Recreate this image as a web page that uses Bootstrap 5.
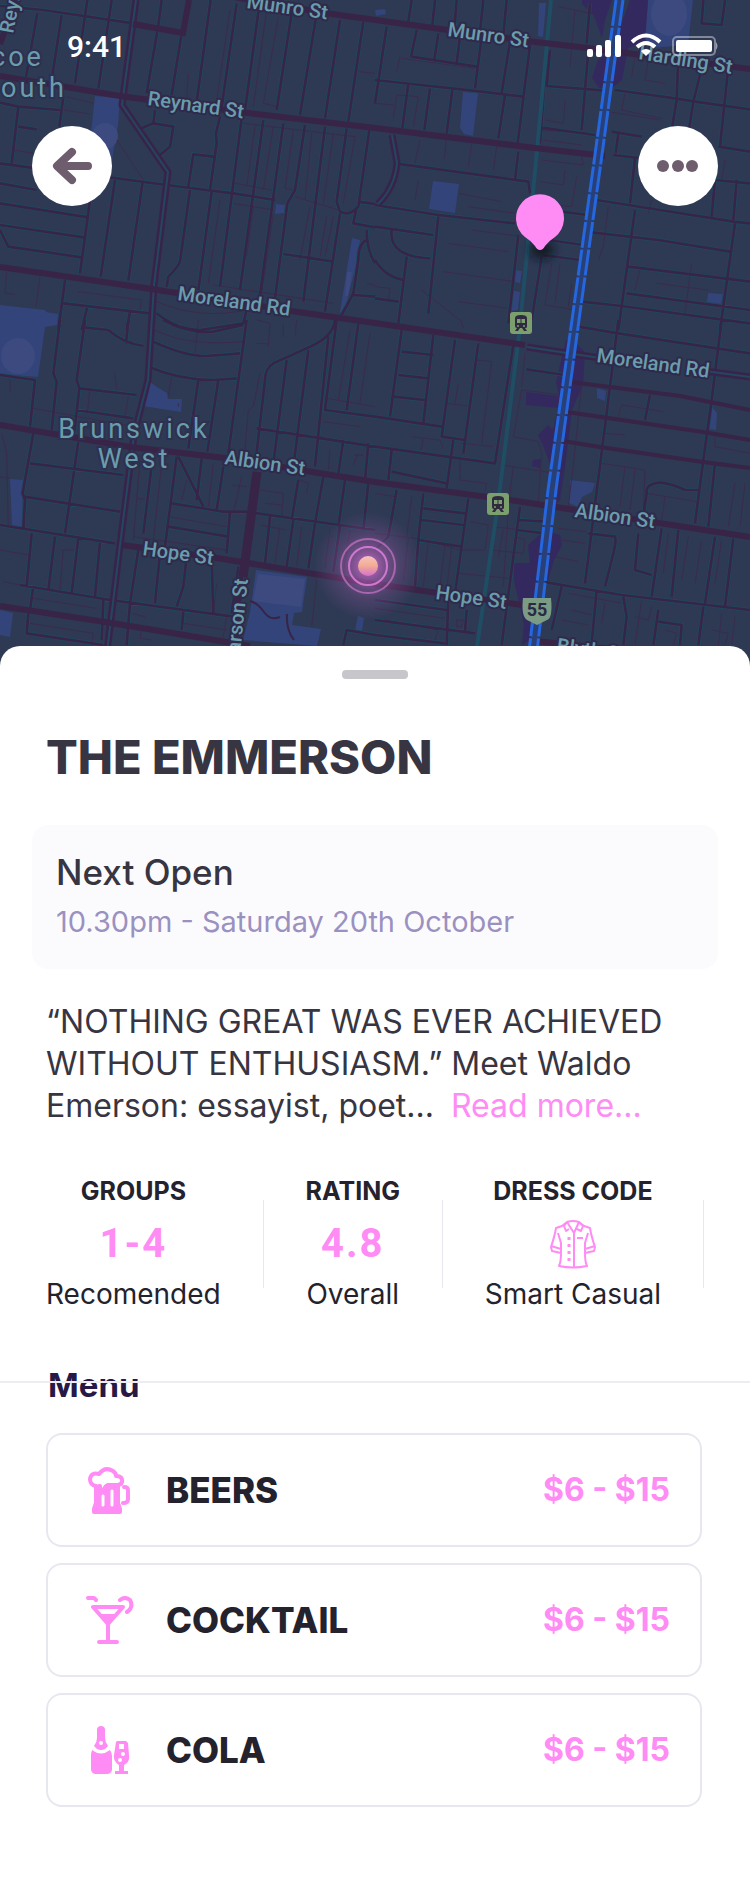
<!DOCTYPE html>
<html lang="en">
<head>
<meta charset="utf-8">
<meta name="viewport" content="width=device-width, initial-scale=1">
<title>The Emmerson</title>
<link href="https://cdn.jsdelivr.net/npm/bootstrap@5.3.0/dist/css/bootstrap.min.css" rel="stylesheet">
<style>
  :root { --pink: #ff8bf4; --ink: #373542; --dark: #24222c; --line: #e7e7ef; }
  body { font-family: Inter, "Open Sans", sans-serif; color: var(--dark); background: #fff; }
  .map-art { width: 100%; height: auto; display: block; background: #2e3954; }
  .map-art text { font-family: Roboto, sans-serif; fill: #6a9dab; }
  .street { font-size: 20px; font-weight: 500; paint-order: stroke; stroke: #2f2a4b; stroke-width: 4px; stroke-linejoin: round; }
  .suburb { font-size: 27px; letter-spacing: 3px; paint-order: stroke; stroke: #2e3050; stroke-width: 4px; }
  .casing { fill: none; stroke: #1d4b61; stroke-width: 12; }
  .minor { fill: none; stroke: #372548; stroke-width: 8; stroke-linejoin: round; }
  .lane { fill: none; stroke: #3a2b4c; stroke-width: 3; }
  .major { fill: none; stroke: #382446; stroke-width: 6; }
  .park { fill: #33447a; }
  .zone { fill: #33295f; }
  .overlay-top { position: absolute; inset: 0 0 auto 0; }
  .status { padding: 32px 32px 0 67px; height: 66px; color: #fff; font: 500 30px/30px Roboto, sans-serif; }
  .tools { padding: 60px 32px 0; }
  .round-btn { width: 80px; height: 80px; background: #fff; border: 0; padding: 0; }
  .sheet { position: relative; margin-top: -44px; border-radius: 20px 20px 0 0; background: #fff; }
  .grip { width: 66px; height: 9px; border-radius: 4px; background: #c7c6cb; margin: 0 auto; }
  .venue { font-size: 47px; line-height: 52px; font-weight: 800; color: var(--ink); margin: 0 0 42px; padding: 0 14px; }
  .next-open { background: #fbfbfe; border-radius: 16px; padding: 24px; margin-bottom: 32px; min-height: 144px; }
  .next-open h2 { font-size: 35px; line-height: 46px; font-weight: 500; color: var(--ink); margin: 0 0 8px; }
  .next-open p { font-size: 29px; line-height: 38px; color: #9b91c0; margin: 0; }
  .about { font-size: 32px; line-height: 42px; color: var(--ink); padding: 0 14px; margin: 0 0 48px; }
  .about a { color: var(--pink); text-decoration: none; margin-left: 8px; }
  .stats { padding: 0 14px; margin-bottom: 69px; }
  .stat { line-height: 36px; font-size: 28px; }
  .stat strong { display: block; font-size: 25px; line-height: 32px; font-weight: 700; }
  .stat .figure { height: 69px; padding-top: 5px; display: flex; align-items: center; justify-content: center; font: 700 40px/64px Roboto, sans-serif; letter-spacing: 2px; color: var(--pink); }
  .divide { width: 1px; height: 88px; background: var(--line); }
  .menu-head { border-top: 2px solid #ededf1; padding: 0 48px; }
  .menu-head h2 { font-size: 33px; line-height: 40px; font-weight: 700; color: #271846; margin: -18px 0 28px; position: relative; z-index: -1; }
  .menu-list { padding: 0 48px 72px 46px; gap: 16px; }
  .menu-item { height: 114px; border: 2px solid var(--line); border-radius: 16px; padding: 0 30px 0 38px; color: var(--dark); text-decoration: none; background: #fff; }
  .menu-item .label-text { font-size: 35px; font-weight: 800; margin-left: 32px; }
  .menu-item .price { font-size: 32px; font-weight: 700; color: var(--pink); }
  .menu-item svg { color: var(--pink); }
</style>
</head>
<body>
<header class="position-relative">
  <svg class="map-art" viewBox="0 0 750 690" role="img" aria-label="Map around Brunswick West">
    <defs>
      <g id="nw"><path d="M0 18L130 30 400 70M112 40L78 232M185 45L155 240M262 0L225 250M335 0L295 265M485 0L475 75 440 280M545 100L515 285M632 0L590 305M710 10L665 320M780 0L735 330M878 20L830 330M950 40L900 345M1020 60L975 355M1090 65L1045 365M0 308L55 320 180 330M55 320L35 490M190 290L178 380M55 380L110 388M0 490L110 505M0 550L110 570M330 532L500 555 700 580 825 600M0 610L265 652M0 675L252 712M0 690L25 740 245 772M270 600L240 820M345 540L302 830M428 545L385 842M570 570L540 785Q535 800 505 830L500 860M425 385L460 370 520 380 510 440 480 465M460 370L465 330M660 350L648 400 650 430 630 570M640 470L580 463 565 560M635 575L595 870M725 355L660 860M790 360L720 870M850 370L780 885M915 375L885 570 862 610 825 895M975 380L910 905M1040 385L1010 605 1020 635Q1050 650 1075 620L1108 390M1020 640L975 935M850 762L1000 785M1075 605L1125 612M1070 620L1060 670 1125 682M1125 790Q1100 750 1100 690M1100 720Q1075 730 1075 780L1060 880 1025 945M1060 885L1125 890M195 840L175 990M190 910L450 940M262 920L245 990M390 935L380 990M470 940Q530 990 600 990L730 970 740 930"/></g>
      <g id="ne"><path d="M35 80L0 310M125 90L108 170M190 100L178 180M255 110L245 190M108 170L305 200M320 110L300 265M405 125L380 280M465 135L428 430M0 240L320 275 445 290M100 250L82 385M165 265L148 390M232 270L215 400M390 285L370 415M110 0L100 65M180 0L172 75M245 0L238 85M325 0L315 95M395 0L385 105M525 150L515 260M515 258L690 272M645 10L635 130M640 150L620 390M500 383L660 405M515 150L495 430M720 270L900 295 960 305 1125 328M910 170L905 300 890 390M985 185L955 305 940 400M1060 200L1035 440M710 395L800 410M730 400L722 460M1030 440L1125 455M715 465L800 475M985 0L980 70 1040 75 1050 0M780 475L765 610M665 600L1075 665 1125 670M1020 540L1125 550M1020 540L1010 650M1085 540L1075 660M430 455L420 540M60 490L460 545 465 580M0 615L190 645 420 670M190 650L160 940M0 680L175 705M50 690Q40 770 165 775M0 780Q30 830 85 840M95 770L70 970M560 635L638 645M520 720L625 735M430 705L400 970M500 765L615 780M500 770L470 960M650 697L850 720 1065 755M780 630L730 990M1080 670L1035 990M760 800L1125 845M755 880L1125 930M620 905L740 918 1125 970M0 895L70 905"/></g>
      <g id="sw"><path d="M0 165L105 180 90 320M180 0L160 160 170 185 155 330M255 0L230 180 238 205 220 360M250 22L325 30Q370 70 430 78M385 0L378 70M238 205L410 225M228 270L400 295M490 0Q560 40 640 35L730 15M460 65Q560 110 620 108L720 100M445 140Q540 180 640 180L710 175M740 0L685 400M595 180L565 385M655 180L622 395M1005 0Q1000 50 930 80L820 130Q795 145 795 180L765 440M860 120L820 430M925 90L880 440M985 50L945 440M1075 10L1040 270M1010 0L975 270 1125 290M770 325L1125 380M100 340L68 520 75 540 70 625M235 365L195 640M90 430L370 465M72 530L360 575M0 615L345 670M95 640L80 800M165 650L145 810M235 655L215 820M300 665L285 830M60 795L330 840 700 890M100 800L90 870M460 395L430 640M530 410L495 680M535 410L610 560M515 550L670 575 735 575M605 415L590 540M670 440L650 570M505 620L685 650M690 575L680 700M735 575L1125 630M810 590L795 730M880 600L860 740M945 610L925 745M1020 620L1000 755M895 480L875 600M970 470L945 610M1035 480L1015 620M1105 490L1090 630M1030 360L1015 460M1105 370L1095 480M415 690L390 850 380 975M480 700L465 850M560 710L550 800 530 860M635 720L640 880M715 740L695 880M85 880L80 940 310 975M310 840L305 960M550 875L545 930M1125 945L1040 930 1030 975"/></g>
      <g id="se"><path d="M80 30L45 290M80 95L175 105M70 165L160 175M55 230L150 240M240 60L200 350 270 360M175 45L145 310M310 70L265 400M0 290L200 320M415 75L360 430 0 380M235 360L215 505M50 390L40 480M50 455L215 490M455 148L570 165M610 20L730 40 1125 100M730 0L705 200 630 790M1040 0L1010 240 985 420 960 610M825 225L810 300M1020 430L1000 620M65 510L40 650 0 690M145 520L130 660 260 680M280 535L240 820M145 565L270 580M140 600L265 615M130 660L120 800M435 560L380 975M430 600L515 605M425 630L510 640M640 640L720 650Q725 660 715 700L690 800M500 785L740 825 1125 870M790 640L780 750 830 765M860 625L830 830M910 630L890 830M1020 650L990 850M1075 655L1050 860M805 590L815 520Q810 490 860 488 900 495 930 510L970 510M560 800L530 930M665 810L650 970M745 830L755 890 745 975M850 870L835 975M985 860L970 975M850 905L920 915 915 975M220 830L215 975M0 840L215 870M0 900L300 940M275 870L270 935M0 945L210 970"/></g>
      <radialGradient id="glow"><stop offset="0" stop-color="#f07ae8" stop-opacity=".8"/><stop offset=".3" stop-color="#c868c6" stop-opacity=".5"/><stop offset=".6" stop-color="#a45cac" stop-opacity=".25"/><stop offset="1" stop-color="#a45cac" stop-opacity="0"/></radialGradient>
      <linearGradient id="sun" x1="0" y1="0" x2="0" y2="1"><stop offset="0" stop-color="#f6c3c3"/><stop offset=".45" stop-color="#f3ae94"/><stop offset="1" stop-color="#d673c8"/></linearGradient>
      <filter id="soft" x="-50%" y="-50%" width="200%" height="200%"><feGaussianBlur stdDeviation="4"/></filter>
      <g id="station"><rect x="-11" y="-11" width="22" height="22" rx="3" fill="#7c9f6e"/><path d="M-6 7V-5Q-6-8 0-8T6-5V4Q6 5 4 5L6 8H3L1 5H-1L-3 8H-6L-4 5Q-6 5-6 3Z" fill="#2f2a40"/><path d="M-4-4h3.500v4H-4zM.5-4H4v4H.5z" fill="#7c9f6e"/><circle cx="-3" cy="3" r="1" fill="#7c9f6e"/><circle cx="3" cy="3" r="1" fill="#7c9f6e"/></g>
    </defs>
    <!-- parks and built-up zones -->
    <path class="park" d="M95 96L120 98 118 125 112 160 88 160zM0 305L45 310 46 312 58 314 57 325 45 327 38 377 0 374zM276 204L285 205 284 213 275 214zM352 238L360 240 357 262 344 312 340 312zM463 92L478 93 473 136 464 134 460 128zM433 181L459 184 455 213 429 209zM539 3L546 3 543 37 538 36zM648 0L693 0 688 45 650 48 645 38zM147 380L157 387 167 393 168 399 182 399 181 412 168 410 143 406zM10 479L23 480 22 527 12 526zM256 570L307 577 302 612 294 613 292 625 321 629 317 646 243 640 250 612zM0 610L13 613 10 637 0 635zM514 270L522 271 520 283 514 282zM512 290L520 292 518 310 511 311zM708 293L723 294 721 304 707 302zM597 388L606 391 605 401 597 398zM712 407L717 413 716 430 709 429zM570 480L595 483 592 492 582 497 578 507 569 503 570 495zM358 616L364 618 362 631 355 630zM375 10L385 9 386 14 376 16z"/>
    <g fill="#3c4a80"><ellipse cx="105" cy="136" rx="13" ry="13"/><ellipse cx="18" cy="356" rx="17" ry="18"/><ellipse cx="669" cy="14" rx="18" ry="22"/><path d="M347 272h5l-4 24h-3zM258 574l47 5-4 28-48-6z"/></g>
    <path class="zone" d="M582 0L612 0 605 20 602 38 594 16 582 4zM630 0H648L645 42 628 48 622 80 612 88 600 89 592 78 598 60 612 50zM526 392L565 397 560 408 526 405zM566 340L572 340 585 352 583 385 572 410 566 460 560 500 550 510 545 500 552 470 543 445 538 435 548 425 553 430 560 400 556 382zM545 530L560 535 562 545 554 560 545 590 535 605 530 640 522 645 524 625 514 580 514 563 530 563 528 545zM533 460L541 459 540 468 532 466z"/>
    <g transform="scale(.33333)">
      <g class="casing"><use href="#nw"/><use href="#ne" x="1125"/><use href="#sw" y="960"/><use href="#se" x="1125" y="960"/></g>
      <!-- back lanes -->
      <g class="lane"><path d="M200 290L280 310M190 330L270 342M350 420L430 540M835 50L790 310 830 320M690 30L650 300M705 550L815 570M700 610L820 630M885 590L1015 630M235 875L425 900 420 930M20 815L15 880 45 883M120 830L108 920M470 905Q600 960 740 930M765 380L740 560M820 380L790 570M880 390L855 565 880 570M1065 410L1030 610M660 600L625 850M760 620L740 770M820 640L785 880M935 400L915 600M1000 400L970 610M730 370L1065 410M1075 215L1125 220M565 220L560 300M930 620L900 780M1000 650L975 770M980 650L960 770M40 450L100 460M640 855L1000 910M1100 850L1125 855M60 0L55 30M800 30L760 320"/>
      <g transform="translate(1125)"><path d="M75 170L65 215M80 175L300 205M65 285L130 290 115 380M0 310L55 315M65 285L55 355M135 420L120 490M215 410L208 475M290 430L280 500M365 440L355 510M570 300L565 370 510 360M550 20L670 45M600 30L585 200M500 390L640 400M505 420L620 435M500 480L625 495 620 470M495 545L565 555 570 510M605 530L590 620 540 615M750 280L740 330 860 355M700 335L855 360M780 170L770 230M820 180L810 240 870 250M280 620L420 640M250 580L380 605M290 690L430 708M220 730L400 755M205 815L420 845M250 905L400 925M530 790L510 915 600 930M555 790L540 910M590 850L580 920M845 850L1000 870M950 790L930 940M700 620L685 740 670 780M795 810L780 870M140 870L260 965 265 985M0 860L45 865 40 900M1000 500L990 590M1050 480L1040 540M130 540L120 600M830 600L820 640"/></g>
      <g transform="translate(0 960)"><path d="M30 180V215M100 265L400 320M270 205L262 280M345 160L350 210M385 230L375 290M5 340L20 400 25 620M465 30Q560 80 730 65M595 0L585 100M515 170L505 230M770 0L810 10 805 80M770 70L805 72M850 10V50M890 0L885 50M780 160L760 260 745 270 735 390M1050 30L1015 240M1110 40L1080 250M980 235L1125 260M970 305L1080 320M1065 405H1090M990 390L985 450M420 420L400 660M455 440L430 450M485 430L460 660M410 535L435 538M400 650L680 690M505 590L680 620M560 480L545 540M640 430L625 560M725 470L700 580M695 495L740 500M780 510L850 520 845 590M795 550L845 555M900 480L925 490 920 520M840 620L825 730M905 620L890 740M780 615L860 630M0 690L85 705M190 690L180 810M220 690H185M10 785L60 795M100 835L290 865M90 910L280 940 275 975M395 880L435 890M425 930L420 955 455 960M550 910L680 930M650 790L640 880M950 780L935 920M1050 630L1030 760M990 630L975 745M535 260V250M0 470L30 475M680 890L665 975M1075 400L1060 435"/></g>
      <g transform="translate(1125 960)"><path d="M305 120L350 125 320 370M210 250L280 258M250 190L240 250M110 350L195 360 205 385M145 355L138 390M260 370L355 380M255 410V480L335 490 330 515M380 435L530 458M415 440L400 560M500 400L490 545M440 210L560 225M440 210L415 350 490 365 500 400M620 190L600 390 580 560M730 290L740 255 865 275M690 340L750 345M1020 350V380L1125 400M680 430L810 450 805 590M750 440L735 560M780 450L765 570M815 520L965 545M870 530L860 600M1080 490L1060 620M1110 490L1095 620M0 520L60 530M110 530L95 650M0 640L120 655 260 690 330 690 340 615 285 605M100 655L85 780M160 665L145 800M210 675L195 800M230 680L215 810M355 620L440 630M385 630L370 710M420 650L450 660 445 700 350 690M400 570L385 800M250 760L400 775M560 660L630 670M540 710L610 725M550 625L635 635M580 820L740 850M590 870L650 885M560 900L640 915M690 850L680 910M800 840L780 975M830 860L820 900 780 890M880 640L865 760M940 650L920 780M980 660L960 790M1040 660L1020 790M0 790L120 800 250 830M0 865L210 895M30 900L190 930 180 960M245 900H265L260 920H245ZM1040 880L1030 975M1080 890L1070 975M870 930L905 940 895 975M1010 930L1060 940 1050 975M450 100L440 200"/></g></g>
      <g class="minor"><use href="#nw"/><use href="#ne" x="1125"/><use href="#sw" y="960"/><use href="#se" x="1125" y="960"/></g>
    </g>
    <!-- creek road -->
    <g fill="none" stroke-linejoin="round"><path d="M136 0L122 105 168 172 154 285 148 380 134 435 120 545 106 660M392 135L397 163Q395 187 378 204M527 347L600 358M705 371L750 377" stroke="#38244a" stroke-width="7"/><path d="M136 0L122 105 168 172 154 285 148 380 134 435 120 545 106 660M392 135L397 163Q395 187 378 204M527 347L600 358M705 371L750 377" stroke="#234760" stroke-width="2"/></g>
    <path d="M551 0L533 193 519 335 498 504 475 660" fill="none" stroke="#1f4d63" stroke-width="4"/>
    <!-- main roads -->
    <path class="major" d="M228 -4L325 13 448 30 527 41 588 48 750 69M133 24L183 33 189 0M0 76L120 96 240 112 375 128 535 148 605 156M0 267L145 288 298 312 375 323 525 345M0 425L130 447 225 458 375 482 510 500 575 510 750 537M122 545L211 557 375 584 522 605M0 606L105 622 160 631 250 646M535 641L620 650M0 44L16 0M240 577L233 660"/>
    <path d="M257 472L243 577" stroke="#382446" stroke-width="9"/>
    <path d="M570 382L610 387 680 396 750 410M567 412L608 418 703 432 750 440M563 441L600 447 703 462 750 468" fill="none" stroke="#382446" stroke-width="4"/>
    <path d="M250 601Q258 603 264 612T280 617M287 614Q286 630 294 640" fill="none" stroke="#382446" stroke-width="2"/>
    <!-- highway -->
    <path d="M619 0L598 162 575 320 552 490 532 660" fill="none" stroke="#284077" stroke-width="8"/>
    <path d="M616 0L594 162 572 320 548 490 528 660M623 0L601 162 579 320 556 490 536 660" fill="none" stroke="#2567de" stroke-width="3" stroke-dasharray="26 2"/>
    <use href="#station" x="521" y="323"/><use href="#station" x="498" y="504"/>
    <path d="M523 598H551Q553 618 547 620L537 625 527 620Q521 616 523 598Z" fill="#7c9b84"/>
    <text x="537" y="616" text-anchor="middle" font-size="18" font-weight="700" style="fill:#282b45">55</text>
    <g class="street">
      <text transform="translate(246 8) rotate(8)">Munro St</text>
      <text transform="translate(447 36) rotate(8)">Munro St</text>
      <text transform="translate(638 59) rotate(9)">Harding St</text>
      <text transform="translate(147 105) rotate(8)">Reynard St</text>
      <text transform="translate(177 300) rotate(8)">Moreland Rd</text>
      <text transform="translate(596 362) rotate(8)">Moreland Rd</text>
      <text transform="translate(224 464) rotate(8)">Albion St</text>
      <text transform="translate(574 517) rotate(8)">Albion St</text>
      <text transform="translate(142 555) rotate(8)">Hope St</text>
      <text transform="translate(435 599) rotate(8)">Hope St</text>
      <text transform="translate(239 664) rotate(-84)">earson St</text>
      <text transform="translate(13 34) rotate(-79)">Reynard</text>
      <text transform="translate(556 652) rotate(8)">Blyth St</text>
    </g>
    <g class="suburb">
      <text x="-9" y="66">coe</text><text x="1" y="97">outh</text>
      <text x="134" y="438" text-anchor="middle">Brunswick</text><text x="134" y="468" text-anchor="middle">West</text>
    </g>
    <circle cx="368" cy="566" r="54" fill="url(#glow)"/>
    <circle cx="368" cy="566" r="27" fill="none" stroke="#a766ad" stroke-width="2"/>
    <circle cx="368" cy="566" r="19" fill="none" stroke="#cf78cf" stroke-width="2"/>
    <circle cx="368" cy="566" r="10" fill="url(#sun)"/>
    <ellipse cx="542" cy="250" rx="12" ry="9" fill="#10131f" opacity=".85" filter="url(#soft)"/>
    <path d="M540 250Q543 250 545 246 550 240 555 237A24 24 0 1 0 525 237Q530 240 535 246 537 250 540 250Z" fill="#ff8bf4"/>
  </svg>
  <div class="overlay-top">
    <div class="status d-flex justify-content-between align-items-start">
      <span>9:41</span>
      <svg width="132" height="26" viewBox="0 0 132 26" fill="#fff" aria-hidden="true">
        <rect x="1" y="17" width="6" height="8" rx="2"/><rect x="10" y="13" width="6" height="12" rx="2"/><rect x="19" y="8" width="6" height="17" rx="2"/><rect x="29" y="3" width="6" height="22" rx="2"/>
        <g fill="none" stroke="#fff" stroke-width="4"><path d="M46 10Q60-3 74 10"/><path d="M51 15Q60 7 69 15"/></g><path d="M55 19Q60 15 65 19L60 24Z"/>
        <rect x="87" y="5" width="42" height="18" rx="4" fill="none" stroke="#fff" stroke-opacity=".4" stroke-width="2"/><rect x="90" y="8" width="36" height="12" rx="2"/><path d="M130 10Q133 14 130 18Z" opacity=".5"/>
      </svg>
    </div>
    <div class="tools d-flex justify-content-between">
      <button type="button" class="round-btn rounded-circle d-flex align-items-center justify-content-center" aria-label="Back">
        <svg width="80" height="80" viewBox="0 0 80 80" fill="none" stroke="#6d5d6d" stroke-width="8" stroke-linecap="round" stroke-linejoin="round"><path d="M56 40H30M40 26L25 40 40 54"/></svg>
      </button>
      <button type="button" class="round-btn rounded-circle d-flex align-items-center justify-content-center" aria-label="More options">
        <svg width="80" height="80" viewBox="0 0 80 80" fill="#6d5d6d"><circle cx="25" cy="40" r="6"/><circle cx="40" cy="40" r="6"/><circle cx="54" cy="40" r="6"/></svg>
      </button>
    </div>
  </div>
</header>

<main class="sheet">
  <section class="px-4 pt-4">
    <div class="grip"></div>
    <div class="px-2 pt-5">
      <h1 class="venue mt-1">THE EMMERSON</h1>
      <div class="next-open">
        <h2>Next Open</h2>
        <p>10.30pm - Saturday 20th October</p>
      </div>
      <p class="about">“NOTHING GREAT WAS EVER ACHIEVED WITHOUT ENTHUSIASM.” Meet Waldo Emerson: essayist, poet... <a href="#about">Read more...</a></p>
      <div class="stats d-flex justify-content-between align-items-center text-center">
        <div class="stat"><strong>GROUPS</strong><span class="figure">1-4</span>Recomended</div>
        <div class="divide"></div>
        <div class="stat"><strong>RATING</strong><span class="figure">4.8</span>Overall</div>
        <div class="divide"></div>
        <div class="stat"><strong>DRESS CODE</strong>
          <span class="figure"><svg width="48" height="50" viewBox="0 0 48 50" fill="none" stroke="#ff8bf4" stroke-width="2" stroke-linejoin="round" aria-hidden="true"><path d="M18 3Q24 1 30 3L35 7 41 9Q42 16 46 28L45 32 36 34Q36 43 38 47 24 50 10 47 12 43 12 34L3 32 2 28Q6 16 7 9L13 7ZM18 3L25 14 30 3M18 3L15 7 17 12 20 10M30 3L34 7 32 12 28 10M25 14V48M12 34V24L9 14M36 34V24L39 14M2 27L12 30M46 27L36 30M28 19H34"/><path d="M20 18v3M20 25v3M20 32v3M20 39v3" stroke-width="3"/></svg></span>Smart Casual</div>
        <div class="divide"></div>
      </div>
    </div>
  </section>

  <section class="position-relative z-0">
    <div class="menu-head"><h2>Menu</h2></div>
    <div class="menu-list d-flex flex-column">
      <a href="#beers" class="menu-item d-flex align-items-center">
        <svg width="48" height="48" viewBox="0 0 48 48" fill="none" stroke="currentColor" stroke-width="4" stroke-linejoin="round" aria-hidden="true"><path d="M10 20V37L8 43V46H34V43L32 37V18H22Q19 19 18 22L16 23Z" fill="currentColor"/><path d="M10 20Q4 19 4 13 5 6 13 8 19 0 27 5 30 7 30 10 37 10 36 16 35 19 31 19H22Q19 20 18 24 14 25 14 20 11 21 10 20Z" fill="#fff"/><path d="M38 21Q42 21 42 24V33Q42 37 37 37" stroke-linecap="round"/><path d="M17 30V39M26 25V39" stroke="#fff" stroke-width="3" stroke-linecap="round"/></svg>
        <span class="label-text">BEERS</span><span class="price ms-auto">$6 - $15</span>
      </a>
      <a href="#cocktail" class="menu-item d-flex align-items-center">
        <svg width="48" height="48" viewBox="0 0 48 48" fill="none" stroke="currentColor" stroke-width="4" stroke-linejoin="round" stroke-linecap="round" aria-hidden="true"><path d="M7 11H37L22 28ZM22 28V46M13 46H31M2 2H8L10 4M34 4Q39 0 44 4 48 11 41 16"/><path d="M13 18H31L22 28Z" fill="currentColor" stroke="none"/></svg>
        <span class="label-text">COCKTAIL</span><span class="price ms-auto">$6 - $15</span>
      </a>
      <a href="#cola" class="menu-item d-flex align-items-center">
        <svg width="48" height="48" viewBox="0 0 48 48" fill="currentColor" aria-hidden="true"><path d="M12 1Q15-1 18 1L19 3V12Q19 16 22 20L19 23Q15 25 11 23L8 20Q11 16 11 12V3ZM6 24Q15 31 24 24 26 27 26 30V44Q25 48 21 48H9Q5 47 5 43V28ZM31 15H40L42 17 43 29Q44 36 38 39V45H42V48H29V45H33V39Q27 35 28 29L30 16Z"/><circle cx="15" cy="17" r="2" fill="#fff"/><path d="M33 18H38V23H33Z" fill="#fff"/><circle cx="37" cy="28" r="2" fill="#fff"/><circle cx="34" cy="34" r="2" fill="#fff"/></svg>
        <span class="label-text">COLA</span><span class="price ms-auto">$6 - $15</span>
      </a>
    </div>
  </section>
</main>
<script src="https://cdn.jsdelivr.net/npm/bootstrap@5.3.0/dist/js/bootstrap.bundle.min.js"></script>
</body>
</html>
